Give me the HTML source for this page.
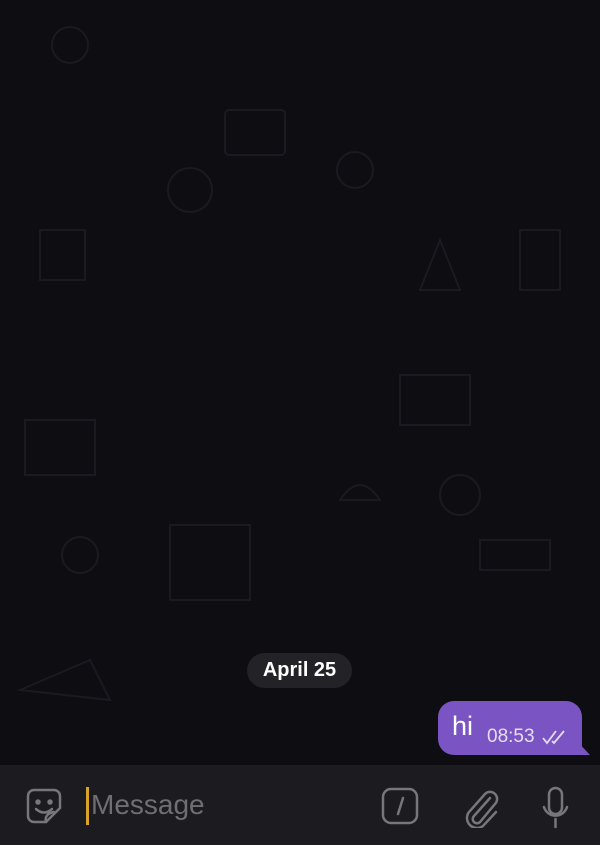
<!DOCTYPE html>
<html><head><meta charset="utf-8"><style>
html,body{margin:0;padding:0;width:600px;height:845px;overflow:hidden;background:#0e0d12;font-family:"Liberation Sans",sans-serif}
.bg{position:absolute;left:0;top:0;width:600px;height:765px;background:#0e0d12}
.pill{position:absolute;left:247px;top:653px;width:105px;height:35px;border-radius:18px;background:#232227;color:#fff;font-size:20px;font-weight:bold;text-align:center;line-height:35px}
.bub{position:absolute;left:438px;top:701px;width:144px;height:54px;background:#7a54c2;border-radius:16px 16px 4px 16px}
.tail{position:absolute;left:576px;top:740px;width:0;height:0;border-left:14px solid #7a54c2;border-top:15px solid transparent}
.hi{position:absolute;left:452px;top:711px;color:#fff;font-size:27px}
.tm{position:absolute;left:487px;top:726px;color:#e6ddf5;font-size:19px}
.bar{position:absolute;left:0;top:765px;width:600px;height:80px;background:#1c1b1f}
.cursor{position:absolute;left:86px;top:787px;width:3px;height:38px;background:#d8a22c}
.msg{position:absolute;left:91px;top:789px;color:#6f6e73;font-size:28px}
svg{position:absolute}
</style></head><body>
<div class="bg"></div>
<svg width="600" height="765" style="left:0;top:0" fill="none" stroke="#1b1a20" stroke-width="2">
<circle cx="70" cy="45" r="18"/><rect x="225" y="110" width="60" height="45" rx="4"/><circle cx="355" cy="170" r="18"/>
<path d="M440 240 l-20 50 h40z"/><rect x="40" y="230" width="45" height="50"/><rect x="25" y="420" width="70" height="55"/>
<rect x="170" y="525" width="80" height="75"/><circle cx="460" cy="495" r="20"/><rect x="400" y="375" width="70" height="50"/>
<path d="M480 540 h70 v30 h-70z"/><circle cx="190" cy="190" r="22"/><path d="M20 690 l70 -30 l20 40z"/>
<circle cx="80" cy="555" r="18"/><path d="M340 500 q20 -30 40 0 z"/><path d="M520 230 h40 v60 h-40z"/>
</svg>
<div class="pill">April 25</div>
<div class="bub"></div><div class="tail"></div>
<div class="hi">hi</div>
<div class="tm">08:53</div>
<svg width="26" height="16" style="left:542px;top:729px" fill="none" stroke="#e6ddf5" stroke-width="1.8"><path d="M1 9 l4 5 l9 -12 M10 12 l2 2 l10 -12"/></svg>
<div class="bar"></div>
<svg width="40" height="40" style="left:24px;top:786px" fill="none" stroke="#77767b" stroke-width="2.5" stroke-linecap="round"><path d="M22 36 H10 a6 6 0 0 1 -6 -6 V10 a6 6 0 0 1 6 -6 h20 a6 6 0 0 1 6 6 v12 z"/><circle cx="14" cy="16" r="1.5" fill="#77767b"/><circle cx="26" cy="16" r="1.5" fill="#77767b"/><path d="M12 23 q8 7 16 0 M22 36 q-2 -8 8 -10"/></svg>
<div class="cursor"></div>
<div class="msg">Message</div>
<svg width="40" height="40" style="left:381px;top:786px" fill="none" stroke="#77767b" stroke-width="2.5" stroke-linecap="round"><rect x="2" y="3" width="34" height="34" rx="8"/><path d="M22 12 l-5 16"/></svg>
<svg width="40" height="42" style="left:462px;top:786px" fill="none" stroke="#77767b" stroke-width="2.5" stroke-linecap="round"><path d="M28 12 L12 30 a4 4 0 0 0 6 6 L33 18 a7 7 0 0 0 -10 -10 L7 26 a10 10 0 0 0 14 14 L34 26"/></svg>
<svg width="30" height="44" style="left:541px;top:785px" fill="none" stroke="#77767b" stroke-width="2.5" stroke-linecap="round"><rect x="8" y="3" width="13" height="26" rx="6.5"/><path d="M3 22 a12 12 0 0 0 23 0 M14.5 34 v8"/></svg>
</body></html>
